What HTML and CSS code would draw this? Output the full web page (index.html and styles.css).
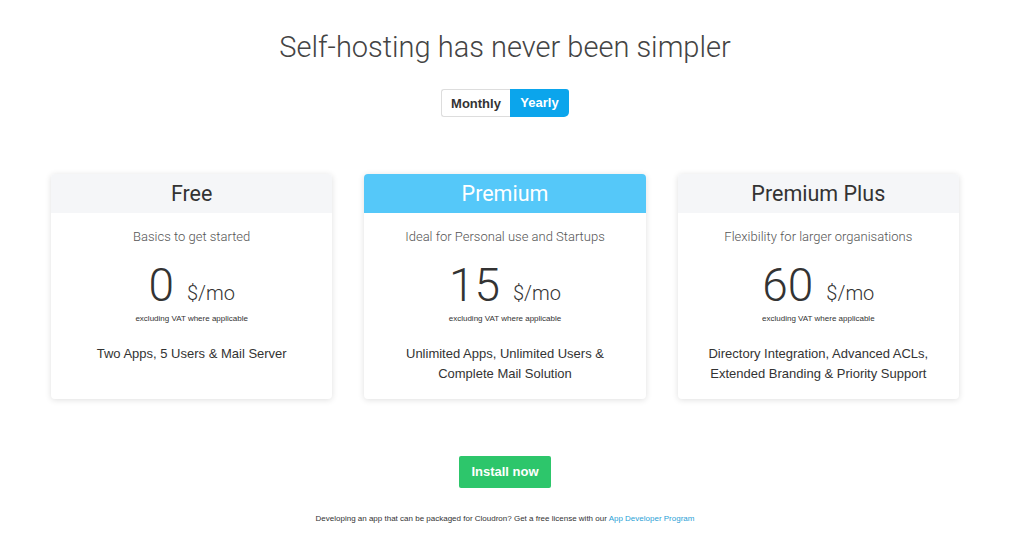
FILE: index.html
```html
<!DOCTYPE html>
<html>
<head>
<meta charset="utf-8">
<link rel="stylesheet" href="styles.css">
</head>
<body>
<div class="page">
  <h1 class="title">Self-hosting has never been simpler</h1>
  <div class="toggle">
    <span class="opt">Monthly</span>
    <span class="opt active">Yearly</span>
  </div>
  <div class="plans">
    <div class="card">
      <div class="card-head">Free</div>
      <div class="card-body">
        <div class="sub">Basics to get started</div>
        <div class="price"><span class="amount">0</span><span class="unit">$/mo</span></div>
        <div class="vat">excluding VAT where applicable</div>
        <div class="features">Two Apps, 5 Users &amp; Mail Server</div>
      </div>
    </div>
    <div class="card">
      <div class="card-head featured">Premium</div>
      <div class="card-body">
        <div class="sub">Ideal for Personal use and Startups</div>
        <div class="price"><span class="amount">15</span><span class="unit">$/mo</span></div>
        <div class="vat">excluding VAT where applicable</div>
        <div class="features">Unlimited Apps, Unlimited Users &amp;<br>Complete Mail Solution</div>
      </div>
    </div>
    <div class="card">
      <div class="card-head">Premium Plus</div>
      <div class="card-body">
        <div class="sub">Flexibility for larger organisations</div>
        <div class="price"><span class="amount">60</span><span class="unit">$/mo</span></div>
        <div class="vat">excluding VAT where applicable</div>
        <div class="features">Directory Integration, Advanced ACLs,<br>Extended Branding &amp; Priority Support</div>
      </div>
    </div>
  </div>
  <div class="cta"><a class="install">Install now</a></div>
  <p class="footnote">Developing an app that can be packaged for Cloudron? Get a free license with our <a class="link">App Developer Program</a></p>
</div>
</body>
</html>
```

FILE: styles.css
```css
* { box-sizing: border-box; }
html, body { margin: 0; padding: 0; background: #fff; }
body { font-family: "Liberation Sans", Arial, sans-serif; color: #333; }
.page { width: 1010px; padding-top: 31px; }
.title {
  margin: 0;
  text-align: center;
  font-family: Roboto, sans-serif;
  font-weight: 300;
  font-size: 29px;
  line-height: 32px;
  color: #444;
}
.toggle {
  display: flex;
  justify-content: center;
  margin-top: 26px;
}
.opt {
  height: 28px;
  line-height: 28px;
  font-weight: bold;
  font-size: 13px;
  color: #333;
  border: 1px solid #ddd;
  border-right: none;
  border-radius: 3px 0 0 3px;
  width: 69px;
  text-align: center;
}
.opt.active {
  background: #0ba5ec;
  color: #fff;
  border: none;
  border-radius: 0 3px 5px 0;
  width: 59px;
}
.plans {
  width: 908px;
  margin: 57px auto 0;
  display: grid;
  grid-template-columns: repeat(3, 1fr);
  gap: 32px;
}
.card {
  background: #fff;
  border-radius: 4px;
  box-shadow: 0 1px 6px rgba(0,0,0,0.13);
  overflow: hidden;
  text-align: center;
}
.card-head {
  height: 39px;
  line-height: 40px;
  background: #f5f6f8;
  font-family: Roboto, sans-serif;
  font-size: 21.5px;
  color: #333;
}
.card-head.featured { background: #55c8f9; color: #fff; }
.card-body { padding: 15px 10px 15px; }
.sub {
  font-family: Roboto, sans-serif;
  font-weight: 300;
  font-size: 13px;
  line-height: 18px;
  color: #555;
}
.price {
  margin-top: 16px;
  display: flex;
  justify-content: center;
  align-items: baseline;
  color: #333;
}
.amount {
  font-family: Roboto, sans-serif;
  font-weight: 300;
  font-size: 46px;
  line-height: 46px;
}
.unit {
  font-family: Roboto, sans-serif;
  font-weight: 300;
  font-size: 20px;
  line-height: 20px;
  margin-left: 13px;
  position: relative;
  top: -1px;
}
.vat {
  font-size: 8px;
  line-height: 12px;
  margin-top: 5px;
  color: #333;
}
.features {
  margin-top: 19px;
  font-size: 13px;
  line-height: 20px;
  color: #333;
}
.cta { text-align: center; margin-top: 57px; }
.install {
  display: inline-block;
  width: 92px;
  height: 32px;
  line-height: 32px;
  background: #2dc66b;
  color: #fff;
  font-weight: bold;
  font-size: 13px;
  border-radius: 2px;
}
.footnote {
  text-align: center;
  margin: 25px 0 0;
  font-size: 8px;
  line-height: 12px;
  color: #333;
}
.link { color: #2b9fd6; }
```
